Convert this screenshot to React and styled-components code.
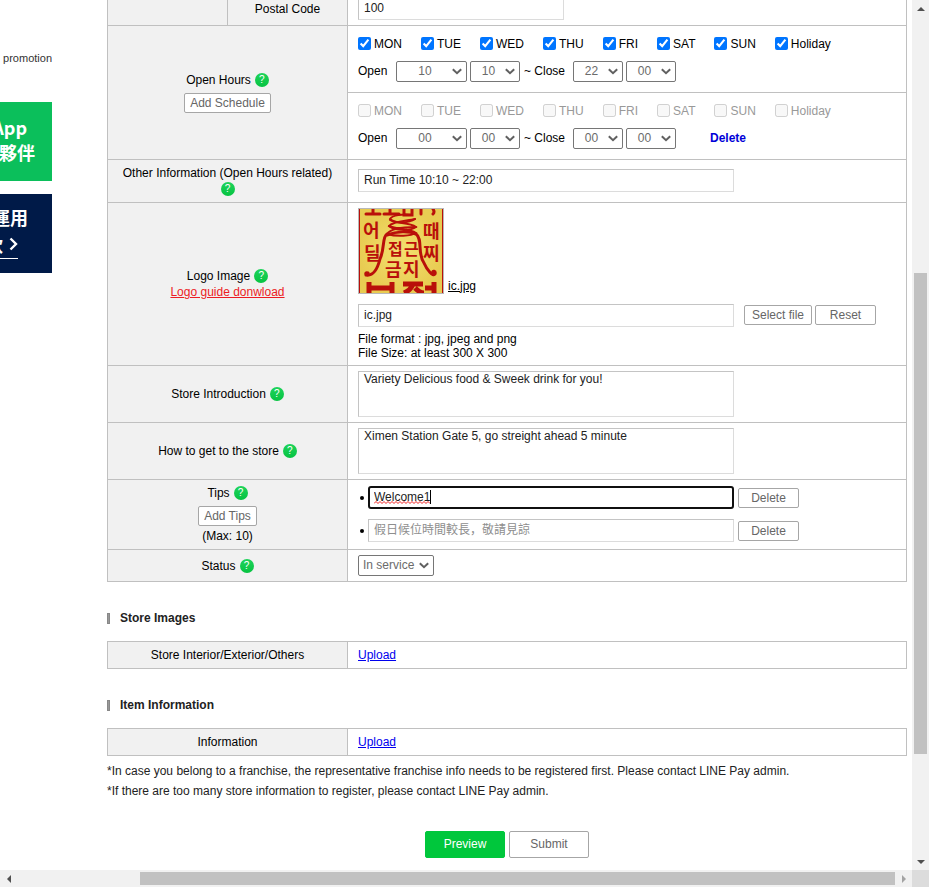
import React from "react";
import styled, { createGlobalStyle, css } from "styled-components";

const GlobalStyle = createGlobalStyle`
  *, *::before, *::after { box-sizing: border-box; }
  body {
    margin: 0;
    background: #fff;
    color: #000;
    font: 12px/16px "Liberation Sans", Arial, "Noto Sans CJK SC", sans-serif;
  }
  button, input, select, textarea { font: inherit; margin: 0; }
`;

/* ---------- Window frame ---------- */

const Frame = styled.div`
  display: grid;
  grid-template-columns: minmax(0, 1fr) 17px;
  grid-template-rows: minmax(0, 1fr) 17px;
  min-height: 100vh;
`;

const Page = styled.div`
  display: flex;
  gap: 55px;
  padding-right: 5px;
  overflow: hidden;
`;

const Track = styled.div`
  display: flex;
  flex-direction: ${(p) => (p.$vertical ? "column" : "row")};
  background: #f1f1f1;
  padding: ${(p) => (p.$vertical ? "0 2px" : "2px 0")};
`;

const TrackSpace = styled.div`
  flex: ${(p) => p.$share} 1 0;
`;

const Thumb = styled.div`
  flex: ${(p) => p.$share} 1 0;
  background: #c1c1c1;
`;

const ArrowBox = styled.div`
  flex: none;
  display: flex;
  align-items: center;
  justify-content: center;
  width: ${(p) => (p.$vertical ? "13px" : "17px")};
  height: ${(p) => (p.$vertical ? "17px" : "13px")};
`;

const Corner = styled.div`
  background: #dcdcdc;
`;

const ARROWS = {
  up: "M0 6 L4 2 L8 6 Z",
  down: "M0 2 L4 6 L8 2 Z",
  left: "M6 0 L2 4 L6 8 Z",
  right: "M2 0 L6 4 L2 8 Z",
};

function Arrow({ dir, color = "#505050" }) {
  return (
    <ArrowBox $vertical={dir === "up" || dir === "down"}>
      <svg width="8" height="8" viewBox="0 0 8 8" aria-hidden="true">
        <path d={ARROWS[dir]} fill={color} />
      </svg>
    </ArrowBox>
  );
}

/* ---------- Side banners ---------- */

const Side = styled.aside`
  flex: none;
  width: 52px;
  padding-top: 50px;
  overflow: hidden;
`;

const SideLink = styled.a`
  display: flex;
  justify-content: flex-end;
  color: #333;
  font-size: 11px;
  text-decoration: none;
`;

const Banner = styled.a`
  display: flex;
  flex-direction: column;
  align-items: flex-end;
  justify-content: center;
  height: 79px;
  margin-top: ${(p) => p.$gap}px;
  padding-bottom: 3px;
  background: ${(p) => p.$bg};
  color: #fff;
  font: 700 18px/25px "Noto Sans CJK TC", sans-serif;
  text-decoration: none;
  white-space: nowrap;
`;

const BannerLine = styled.span`
  margin-right: ${(p) => p.$right}px;
`;

const BannerMore = styled.span`
  display: flex;
  align-items: center;
  gap: 6px;
  margin-right: 34px;
  border-bottom: 1px solid #fff;
  line-height: 28px;
`;

/* ---------- Form table ---------- */

const Main = styled.main`
  flex: 1;
  min-width: 0;
`;

const Table = styled.table`
  width: 100%;
  margin-top: ${(p) => p.$top}px;
  border-collapse: collapse;
  table-layout: fixed;
`;

const HalfCol = styled.col`
  width: 120px;
`;

const Row = styled.tr`
  height: ${(p) => p.$h}px;
`;

const Head = styled.th`
  padding: 0 10px;
  border: 1px solid #c0c0c0;
  background: #f1f1f1;
  font-weight: 400;
  text-align: center;
  vertical-align: middle;
`;

const Cell = styled.td`
  padding: 0 10px 1px;
  border: 1px solid #c0c0c0;
  vertical-align: middle;
`;

const HeadStack = styled.div`
  display: flex;
  flex-direction: column;
  align-items: center;
`;

const LabelLine = styled.span`
  display: flex;
  flex-wrap: wrap;
  align-items: center;
  justify-content: center;
  column-gap: 4px;
`;

const HelpButton = styled.button`
  display: inline-flex;
  align-items: center;
  justify-content: center;
  width: 14px;
  height: 14px;
  margin: 1px 0;
  padding: 0;
  border: 0;
  border-radius: 50%;
  background: linear-gradient(#1fd35b, #06c341);
  color: #fff;
  font-size: 10px;
  line-height: 14px;
`;

const Help = () => <HelpButton type="button" aria-label="Help">?</HelpButton>;

const RedLink = styled.a`
  color: #ec1c24;
`;

const FileLink = styled.a`
  color: #000;
`;

const UploadLink = styled.a`
  color: #0000ee;
`;

const Button = styled.button`
  height: 20px;
  min-width: ${(p) => p.$min || 0}px;
  margin: ${(p) => p.$margin || 0};
  padding: 0 ${(p) => p.$pad || 5}px;
  border: 1px solid #a6a6a6;
  border-radius: 2px;
  background: #fff;
  color: #666;
  line-height: 18px;
  white-space: nowrap;
`;

const field = css`
  display: block;
  border: 1px solid;
  border-color: #c4c4c4 #dcdcdc #dcdcdc #c4c4c4;
  border-radius: 0;
  background: #fff;
  color: #222;
  outline: none;
`;

const TextInput = styled.input`
  ${field}
  width: ${(p) => p.$w || 376}px;
  height: 23px;
  padding: 0 5px 1px;
  &::placeholder { color: #8e8e8e; opacity: 1; }
  ${(p) =>
    p.$focused &&
    css`
      padding: 0 4px 1px;
      border: 2px solid #101010;
      border-radius: 3px;
    `}
`;

const TextArea = styled.textarea`
  ${field}
  width: 376px;
  height: 46px;
  padding: 0 5px;
  line-height: 14px;
  resize: none;
`;

const Line = styled.div`
  display: flex;
  align-items: center;
  gap: ${(p) => p.$gap}px;
`;

/* ---------- Opening hours ---------- */

const Days = styled.div`
  display: flex;
  gap: 19px;
  margin-bottom: 9px;
`;

const Day = styled.label`
  display: flex;
  align-items: center;
  gap: 3px;
  color: ${(p) => (p.$off ? "#999" : "#000")};
`;

const DayBox = styled.input`
  width: 13px;
  height: 13px;
`;

const Word = styled.span`
  width: ${(p) => p.$w}px;
  margin-left: ${(p) => p.$left || 0}px;
`;

const Picker = styled.span`
  position: relative;
  display: block;
  width: ${(p) => p.$w}px;
  color: #666;
`;

const PickerSelect = styled.select`
  display: block;
  width: 100%;
  height: 21px;
  padding: 0 ${(p) => (p.$left ? 4 : 13)}px 1px ${(p) => (p.$left ? 4 : 0)}px;
  appearance: none;
  border: 1px solid #767676;
  border-radius: 2px;
  background: #fff;
  color: #6b6b6b;
  text-align: ${(p) => (p.$left ? "left" : "center")};
  text-align-last: ${(p) => (p.$left ? "left" : "center")};
`;

const PickerArrow = styled.svg`
  position: absolute;
  top: 7px;
  right: 5px;
  pointer-events: none;
`;

function Dropdown({ w, value, label, left }) {
  return (
    <Picker $w={w}>
      <PickerSelect aria-label={label} defaultValue={value} $left={left}>
        <option>{value}</option>
      </PickerSelect>
      <PickerArrow width="10" height="7" viewBox="0 0 10 7" aria-hidden="true">
        <path d="M.8 1.2 L5 5.2 L9.2 1.2" fill="none" stroke="#606060" strokeWidth="2" />
      </PickerArrow>
    </Picker>
  );
}

const DeleteLink = styled.a`
  margin-left: 31px;
  color: #0000d8;
  font-weight: 700;
  text-decoration: none;
`;

const DAYS = ["MON", "TUE", "WED", "THU", "FRI", "SAT", "SUN", "Holiday"];

function Schedule({ active, times, removable }) {
  return (
    <>
      <Days>
        {DAYS.map((d) => (
          <Day key={d} $off={!active}>
            <DayBox type="checkbox" defaultChecked={active} disabled={!active} />
            {d}
          </Day>
        ))}
      </Days>
      <Line $gap={3}>
        <Word $w={35}>Open</Word>
        <Dropdown w={71} value={times[0]} label="Opening hour" />
        <Dropdown w={50} value={times[1]} label="Opening minute" />
        <Word $w={46} $left={1}>~ Close</Word>
        <Dropdown w={50} value={times[2]} label="Closing hour" />
        <Dropdown w={50} value={times[3]} label="Closing minute" />
        {removable && <DeleteLink href="#delete">Delete</DeleteLink>}
      </Line>
    </>
  );
}

/* ---------- Logo, tips and lower sections ---------- */

const LogoLine = styled.div`
  display: flex;
  align-items: flex-end;
  gap: 4px;
  margin-bottom: 10px;
`;

const LogoBox = styled.span`
  width: 86px;
  height: 86px;
  border: 1px solid #b8b8b8;
  svg { display: block; }
`;

function Talisman() {
  const glyph = {
    fontFamily: '"Noto Sans CJK KR", sans-serif',
    fontWeight: 700,
    fill: "#b9100a",
  };
  return (
    <svg width="84" height="84" viewBox="0 0 84 84" role="img" aria-label="ic.jpg">
      <defs>
        <radialGradient id="paper">
          <stop offset="0" stopColor="#f4e070" />
          <stop offset="1" stopColor="#e8cc52" />
        </radialGradient>
      </defs>
      <rect width="84" height="84" fill="url(#paper)" />
      <path d="M.5 0V84M83.5 0V84" stroke="#b9100a" />
      <g fill="none" stroke="#b9100a" strokeLinecap="round">
        <path d="M7 5H21M14 0V5M25 5H40M31 0V5M45 0V6H53V0M62 0V5M74 0Q76 3 74 5" strokeWidth="3" />
        <path d="M52 6C44 5 33 6 31 10C36 15 50 14 56 10" strokeWidth="2" />
        <path d="M56 10C48 12 34 12 30 17C36 22 52 22 57 18C50 13 38 15 31 11" strokeWidth="2" />
        <path d="M57 18C44 18 32 19 28 25C38 28 52 27 57 24C50 19 38 21 30 17" strokeWidth="2" />
        <path d="M28 25C23 28 26 39 21 50C18 62 13 67 7 66Q6 63 9 64M28 26C38 22 50 22 57 25C64 30 58 44 65 54C68 61 74 68 76 65C77 62 73 61 74 64" strokeWidth="3" />
      </g>
      <g style={glyph} fontSize="18">
        <text x="4" y="28">어</text>
        <text x="5" y="51">딜</text>
        <text x="64" y="29">때</text>
        <text x="64" y="51">찌</text>
        <text x="29" y="46" fontSize="16">접</text>
        <text x="45" y="46" fontSize="16">근</text>
        <text x="26" y="67" fontSize="18">금</text>
        <text x="44" y="67" fontSize="18">지</text>
      </g>
      <path
        d="M10 73V84M33 73V84M10 79H33M44 75H64M54 75Q52 81 45 84M56 79Q61 84 65 84M75 73V84M66 79H75"
        fill="none"
        stroke="#b9100a"
        strokeWidth="5"
      />
    </svg>
  );
}

const Notes = styled.p`
  margin: 5px 0 0;
  line-height: 14px;
`;

const Tips = styled.ul`
  display: flex;
  flex-direction: column;
  gap: 10px;
  margin: 0;
  padding: 0;
  list-style: none;
`;

const Tip = styled.li`
  display: flex;
  align-items: center;
  gap: 4px;
`;

const Dot = styled.span`
  width: 4px;
  height: 4px;
  margin-left: 2px;
  border-radius: 50%;
  background: #000;
`;

const InputWrap = styled.span`
  position: relative;
`;

const Caret = styled.span`
  position: absolute;
  top: 4px;
  left: 62px;
  width: 1px;
  height: 14px;
  background: #000;
`;

const Squiggle = styled.svg`
  position: absolute;
  top: 15px;
  left: 6px;
  pointer-events: none;
`;

const squigglePath =
  "M0 2.5" + Array.from({ length: 28 }, (_, i) => `L${i * 2 + 2} ${i % 2 ? 2.5 : 0.5}`).join("");

const SectionTitle = styled.h2`
  display: flex;
  align-items: center;
  gap: 10px;
  margin: ${(p) => p.$top}px 0 15px;
  color: #222;
  font-size: 12px;
  line-height: 16px;
  &::before {
    content: "";
    width: 3px;
    height: 11px;
    border: 1px solid #888;
    background: #999;
  }
`;

const FootNotes = styled.p`
  margin: 5px 0 0;
  color: #222;
  line-height: 20px;
`;

const Actions = styled.div`
  display: flex;
  justify-content: center;
  gap: 4px;
  margin: 30px 0 12px;
`;

const ActionButton = styled.button`
  width: 80px;
  height: 27px;
  padding: 0 0 1px;
  border: 1px solid ${(p) => (p.$primary ? "#00c73c" : "#a6a6a6")};
  border-radius: 2px;
  background: ${(p) => (p.$primary ? "#00c73c" : "#fff")};
  color: ${(p) => (p.$primary ? "#fff" : "#666")};
`;

function FieldRow({ h, label, id, children }) {
  return (
    <Row $h={h}>
      <Head colSpan={2} scope="row">
        <LabelLine>
          <label htmlFor={id}>{label}</label>
          <Help />
        </LabelLine>
      </Head>
      <Cell>{children}</Cell>
    </Row>
  );
}

function UploadSection({ title, label, top }) {
  return (
    <section>
      <SectionTitle $top={top}>{title}</SectionTitle>
      <Table $top={0}>
        <colgroup>
          <HalfCol />
          <HalfCol />
          <col />
        </colgroup>
        <tbody>
          <Row $h={27}>
            <Head colSpan={2} scope="row">{label}</Head>
            <Cell><UploadLink href="#upload">Upload</UploadLink></Cell>
          </Row>
        </tbody>
      </Table>
    </section>
  );
}

export default function App() {
  return (
    <>
      <GlobalStyle />
      <Frame>
        <Page>
          <Side>
            <SideLink href="#promotion">promotion</SideLink>
            <Banner href="#app" $bg="#0bbf5b" $gap={36}>
              <BannerLine $right={25}>App</BannerLine>
              <BannerLine $right={17}>夥伴</BannerLine>
            </Banner>
            <Banner href="#use" $bg="#001a48" $gap={13}>
              <BannerLine $right={24}>運用</BannerLine>
              <BannerMore>
                款
                <svg width="9" height="14" viewBox="0 0 9 14" aria-hidden="true">
                  <path d="M1.5 1.5 L7 7 L1.5 12.5" fill="none" stroke="#fff" strokeWidth="2.4" />
                </svg>
              </BannerMore>
            </Banner>
          </Side>

          <Main>
            <Table $top={-8}>
              <colgroup>
                <HalfCol />
                <HalfCol />
                <col />
              </colgroup>
              <tbody>
                <Row $h={33}>
                  <Head />
                  <Head scope="row"><label htmlFor="postal">Postal Code</label></Head>
                  <Cell><TextInput id="postal" $w={206} defaultValue="100" /></Cell>
                </Row>
                <Row $h={67}>
                  <Head colSpan={2} rowSpan={2} scope="rowgroup">
                    <HeadStack>
                      <LabelLine>Open Hours <Help /></LabelLine>
                      <Button type="button" $margin="5px 0 0">Add Schedule</Button>
                    </HeadStack>
                  </Head>
                  <Cell><Schedule active times={["10", "10", "22", "00"]} /></Cell>
                </Row>
                <Row $h={67}>
                  <Cell><Schedule removable times={["00", "00", "00", "00"]} /></Cell>
                </Row>
                <FieldRow h={43} id="other" label="Other Information (Open Hours related)">
                  <TextInput id="other" defaultValue="Run Time 10:10 ~ 22:00" />
                </FieldRow>
                <Row $h={163}>
                  <Head colSpan={2} scope="row">
                    <HeadStack>
                      <LabelLine><label htmlFor="logo">Logo Image</label> <Help /></LabelLine>
                      <RedLink href="#guide">Logo guide donwload</RedLink>
                    </HeadStack>
                  </Head>
                  <Cell>
                    <LogoLine>
                      <LogoBox><Talisman /></LogoBox>
                      <FileLink href="#logo">ic.jpg</FileLink>
                    </LogoLine>
                    <Line $gap={3}>
                      <TextInput id="logo" defaultValue="ic.jpg" />
                      <Button type="button" $pad={7} $margin="0 0 0 7px">Select file</Button>
                      <Button type="button" $min={61}>Reset</Button>
                    </Line>
                    <Notes>
                      File format : jpg, jpeg and png<br />
                      File Size: at least 300 X 300
                    </Notes>
                  </Cell>
                </Row>
                <FieldRow h={57} id="intro" label="Store Introduction">
                  <TextArea id="intro" defaultValue="Variety Delicious food &amp; Sweek drink for you!" />
                </FieldRow>
                <FieldRow h={57} id="route" label="How to get to the store">
                  <TextArea id="route" defaultValue="Ximen Station Gate 5, go streight ahead 5 minute" />
                </FieldRow>
                <Row $h={70}>
                  <Head colSpan={2} scope="row">
                    <HeadStack>
                      <LabelLine>Tips <Help /></LabelLine>
                      <Button type="button" $margin="5px 0 2px">Add Tips</Button>
                      <span>(Max: 10)</span>
                    </HeadStack>
                  </Head>
                  <Cell>
                    <Tips>
                      <Tip>
                        <Dot />
                        <InputWrap>
                          <TextInput $w={366} $focused aria-label="Tip 1" defaultValue="Welcome1" spellCheck={false} />
                          <Squiggle width="56" height="3" viewBox="0 0 56 3" aria-hidden="true">
                            <path d={squigglePath} fill="none" stroke="#f02020" />
                          </Squiggle>
                          <Caret />
                        </InputWrap>
                        <Button type="button" $min={61}>Delete</Button>
                      </Tip>
                      <Tip>
                        <Dot />
                        <TextInput $w={366} aria-label="Tip 2" placeholder="假日候位時間較長，敬請見諒" />
                        <Button type="button" $min={61}>Delete</Button>
                      </Tip>
                    </Tips>
                  </Cell>
                </Row>
                <Row $h={32}>
                  <Head colSpan={2} scope="row">
                    <LabelLine>Status <Help /></LabelLine>
                  </Head>
                  <Cell><Dropdown w={76} value="In service" label="Status" left /></Cell>
                </Row>
              </tbody>
            </Table>

            <UploadSection title="Store Images" label="Store Interior/Exterior/Others" top={28} />
            <UploadSection title="Item Information" label="Information" top={28} />

            <FootNotes>
              *In case you belong to a franchise, the representative franchise info needs to be
              registered first. Please contact LINE Pay admin.
              <br />
              *If there are too many store information to register, please contact LINE Pay admin.
            </FootNotes>
            <Actions>
              <ActionButton type="button" $primary>Preview</ActionButton>
              <ActionButton type="submit">Submit</ActionButton>
            </Actions>
          </Main>
        </Page>

        <Track $vertical>
          <Arrow dir="up" />
          <TrackSpace $share={256} />
          <Thumb $share={481} />
          <TrackSpace $share={99} />
          <Arrow dir="down" />
        </Track>
        <Track>
          <Arrow dir="left" />
          <TrackSpace $share={123} />
          <Thumb $share={755} />
          <Arrow dir="right" color="#a3a3a3" />
        </Track>
        <Corner />
      </Frame>
    </>
  );
}
